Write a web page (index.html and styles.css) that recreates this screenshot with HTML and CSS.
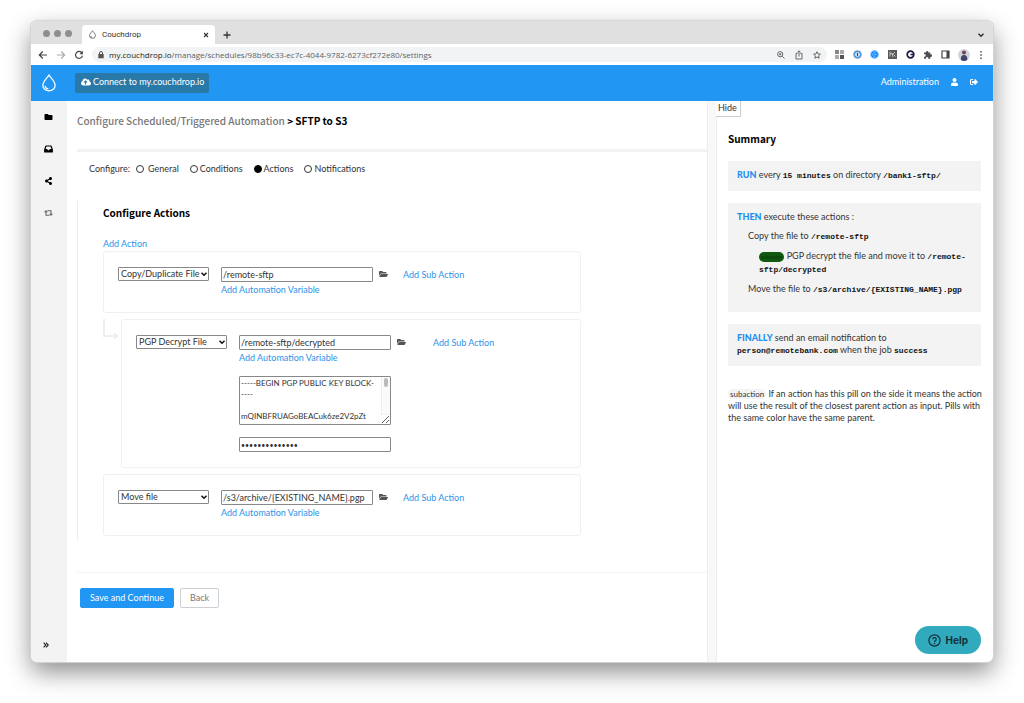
FILE: index.html
```html
<!DOCTYPE html>
<html lang="en">
<head>
<meta charset="utf-8">
<meta name="viewport" content="width=device-width, initial-scale=1">
<title>Couchdrop</title>
<link rel="stylesheet" href="styles.css">
</head>
<body>
<svg class="defs" aria-hidden="true">
  <symbol id="drop" viewBox="0 0 16 20"><path d="M8 1.200C6 4.600 1.200 8.400 1.200 12.500a6.800 6.300 0 0 0 13.600 0C14.800 8.400 10 4.600 8 1.200z" fill="none" stroke="currentColor" stroke-width="1.400"/><path d="M3.600 13.200c.3 2 1.600 3.200 3.800 3.500" fill="none" stroke="currentColor" stroke-width="1.300"/></symbol>
  <symbol id="folder-open" viewBox="0 0 576 512"><path fill="currentColor" d="M572.694 292.093L500.27 416.248A63.997 63.997 0 0 1 444.989 448H45.025c-18.523 0-30.064-20.093-20.731-36.093l72.424-124.155A64 64 0 0 1 152 256h399.964c18.523 0 30.064 20.093 20.73 36.093zM152 224h328v-48c0-26.51-21.49-48-48-48H272l-64-64H48C21.49 64 0 85.49 0 112v278.046l69.077-118.418C86.214 242.25 117.989 224 152 224z"/></symbol>
  <symbol id="chevron" viewBox="0 0 8 8"><path d="M1.500 2.800L4 5.300l2.500-2.500" fill="none" stroke="currentColor" stroke-width="1.500"/></symbol>
</svg>

<div class="window">
  <div class="tabstrip">
    <div class="lights"><i></i><i></i><i></i></div>
    <div class="tab">
      <svg class="tab-icon"><use href="#drop"/></svg>
      <span>Couchdrop</span>
      <button class="plain tab-close" aria-label="Close tab"><svg width="6" height="6" viewBox="0 0 6 6"><path d="M1 1l4 4M5 1L1 5" stroke="#333" stroke-width="1.100"/></svg></button>
    </div>
    <button class="plain tab-new" aria-label="New tab"><svg width="8" height="8" viewBox="0 0 8 8"><path d="M4 .5v7M.5 4h7" stroke="#333" stroke-width="1.300"/></svg></button>
    <button class="plain tab-list" aria-label="Search tabs"><svg width="8" height="8"><use href="#chevron"/></svg></button>
  </div>

  <div class="toolbar">
    <div class="nav">
      <button class="plain" aria-label="Back"><svg width="10" height="10" viewBox="0 0 10 10"><path d="M9 5H1.500M4.800 1.500L1.300 5l3.500 3.500" fill="none" stroke="#444" stroke-width="1.200"/></svg></button>
      <button class="plain" aria-label="Forward"><svg width="10" height="10" viewBox="0 0 10 10"><path d="M1 5h7.500M5.200 1.500L8.700 5 5.200 8.500" fill="none" stroke="#aaa" stroke-width="1.100"/></svg></button>
      <button class="plain" aria-label="Reload"><svg width="10" height="10" viewBox="0 0 10 10"><path d="M8 3A3.500 3.500 0 1 0 8.500 5.600" fill="none" stroke="#444" stroke-width="1.200"/><path d="M8.900.8v3.400H5.500z" fill="#444"/></svg></button>
    </div>
    <div class="address">
      <svg width="6" height="8" viewBox="0 0 6 8"><path d="M.3 3h5.400v4.300H.3z" fill="#555"/><path d="M1.500 3V2a1.500 1.500 0 0 1 3 0v1" fill="none" stroke="#555"/></svg>
      <span class="url"><b>my.couchdrop.io</b>/manage/schedules/98b96c33-ec7c-4044-9782-6273cf272e80/settings</span>
      <div class="address-tools">
        <svg width="8" height="8" viewBox="0 0 8 8"><circle cx="3.200" cy="3.200" r="2.600" fill="none" stroke="#666"/><path d="M5.200 5.200L7.600 7.600M2 3.200h2.400M3.200 2v2.400" stroke="#666" stroke-width=".9"/></svg>
        <svg width="8" height="10" viewBox="0 0 8 10"><path d="M2.500 3.500H1V9h6V3.500H5.500M4 6.500V1M2.300 2.500L4 .8l1.700 1.700" fill="none" stroke="#666"/></svg>
        <svg width="8" height="8" viewBox="0 0 8 8"><path d="M4 .7l1 2.200 2.400.3-1.800 1.600.5 2.400L4 6 1.900 7.200l.5-2.400L.6 3.200 3 2.900z" fill="none" stroke="#555" stroke-width=".9"/></svg>
      </div>
    </div>
    <div class="extensions">
      <svg width="9" height="9" viewBox="0 0 9 9"><path d="M0 0h4v4H0z" fill="#888"/><path d="M5 0h4v4H5zM0 5h4v4H0z" fill="#aaa"/><path d="M5 5h4v4H5z" fill="#555"/></svg>
      <svg width="9" height="9" viewBox="0 0 9 9"><circle cx="4.500" cy="4.500" r="4.300" fill="#8a9aac"/><circle cx="4.500" cy="4.500" r="3" fill="#d9ecff" stroke="#1e8cf0"/><path d="M4.500 2.700v3.600" stroke="#444" stroke-width="1.200"/></svg>
      <svg width="9" height="9" viewBox="0 0 9 9"><circle cx="4.500" cy="4.500" r="4.400" fill="#8cc4ff"/><circle cx="4.500" cy="4.500" r="3.300" fill="#0a84ff"/><path d="M6 3.300a1.900 1.900 0 1 0 0 2.400M4 4.500h2.500" fill="none" stroke="#9fd4ff" stroke-width=".7"/></svg>
      <svg width="9" height="9" viewBox="0 0 9 9"><path d="M0 0h9v9H0z" fill="#5a5a5a"/><path d="M2 1.500v5M2 4l2-1 1 4M4 5l3-3M5.500 4.500l2 2" fill="none" stroke="#ddd" stroke-width=".8"/></svg>
      <svg width="9" height="9" viewBox="0 0 9 9"><circle cx="4.500" cy="4.500" r="3.300" fill="#fff" stroke="#1b1646" stroke-width="1.700"/><path d="M4.500 4.500H8" stroke="#1b1646" stroke-width="1.500"/></svg>
      <svg width="9" height="9" viewBox="0 0 9 9"><path d="M1 2.500h2A1.200 1.200 0 1 1 5.300 2.500h2v2a1.200 1.200 0 1 1 0 2.200v2H5.200a1.200 1.200 0 1 0-2.200 0H1V6.500a1.200 1.200 0 1 0 0-2.200z" fill="#4a4d52"/></svg>
      <svg width="9" height="9" viewBox="0 0 9 9"><path d="M1 1h7v7H1z" fill="none" stroke="#444" stroke-width="1.200"/><path d="M5.500 1H8v7H5.500z" fill="#444"/></svg>
      <svg width="12" height="12" viewBox="0 0 12 12"><circle cx="6" cy="6" r="6" fill="#cfd4e0"/><circle cx="6" cy="3.500" r="2" fill="#6a4a42"/><path d="M3 11c-.5-4 1-5 3-5s3.700 1 3.200 5a6 6 0 0 1-6.200 0z" fill="#3c4468"/><path d="M5 6h1.500l-.5 3z" fill="#a33"/></svg>
      <svg width="4" height="8" viewBox="0 0 4 8"><path d="M1.300 0h1.400v1.500H1.300zM1.300 3.200h1.400v1.500H1.300zM1.300 6.400h1.400v1.500H1.300z" fill="#444"/></svg>
    </div>
  </div>

  <header class="appbar">
    <a class="brand" href="#" aria-label="Couchdrop"><svg width="16" height="18"><use href="#drop"/></svg></a>
    <a class="connect" href="#"><svg width="10" height="8" viewBox="0 0 640 512"><path fill="currentColor" d="M537.6 226.6c4.100-10.700 6.400-22.400 6.400-34.600 0-53-43-96-96-96-19.700 0-38.100 6-53.300 16.200C367 64.200 315.300 32 256 32c-88.400 0-160 71.600-160 160 0 2.700.1 5.400.2 8.100C40.200 219.800 0 273.200 0 336c0 79.500 64.500 144 144 144h368c70.700 0 128-57.300 128-128 0-61.900-44-113.600-102.400-125.400zM393.400 288H328v112c0 8.800-7.200 16-16 16h-48c-8.800 0-16-7.200-16-16V288h-65.400c-14.300 0-21.400-17.200-11.300-27.300l105.400-105.400c6.200-6.200 16.400-6.200 22.600 0l105.400 105.400c10.100 10.100 2.900 27.300-11.300 27.300z"/></svg>Connect to my.couchdrop.io</a>
    <nav class="account">
      <a href="#">Administration</a>
      <a href="#" aria-label="Profile"><svg width="7" height="8" viewBox="0 0 448 512"><path fill="currentColor" d="M224 256c70.700 0 128-57.300 128-128S294.700 0 224 0 96 57.300 96 128s57.300 128 128 128zm89.600 32h-16.700c-22.200 10.200-46.900 16-72.900 16s-50.600-5.800-72.900-16h-16.700C60.200 288 0 348.200 0 422.400V464c0 26.500 21.500 48 48 48h352c26.500 0 48-21.500 48-48v-41.600c0-74.200-60.200-134.400-134.400-134.400z"/></svg></a>
      <a href="#" aria-label="Sign out"><svg width="8" height="8" viewBox="0 0 512 512"><path fill="currentColor" d="M497 273L329 441c-15 15-41 4.500-41-17v-96H152c-13.300 0-24-10.700-24-24v-96c0-13.300 10.700-24 24-24h136V88c0-21.400 25.900-32 41-17l168 168c9.300 9.400 9.300 24.600 0 34zM192 436v-40c0-6.600-5.400-12-12-12H96c-17.700 0-32-14.300-32-32V160c0-17.700 14.300-32 32-32h84c6.600 0 12-5.400 12-12V76c0-6.600-5.400-12-12-12H96c-53 0-96 43-96 96v192c0 53 43 96 96 96h84c6.600 0 12-5.400 12-12z"/></svg></a>
    </nav>
  </header>

  <div class="app">
    <nav class="rail">
      <a href="#" aria-label="Files"><svg width="9" height="8" viewBox="0 0 512 512"><path d="M464 128H272l-64-64H48C21.490 64 0 85.490 0 112v288c0 26.510 21.490 48 48 48h416c26.510 0 48-21.490 48-48V176c0-26.510-21.490-48-48-48z"/></svg></a>
      <a href="#" aria-label="Inbox"><svg width="9" height="8" viewBox="0 0 9 8"><path d="M2 1h5l1.300 3.500V7H.7V4.500zM1 4.700h2l.7 1.200h1.600L6 4.700h2" fill="none" stroke="#000" stroke-width="1.200" stroke-linejoin="round"/><path d="M.7 5h2.100l.9 1.200h1.600L6.200 5h2.100v2H.7z"/></svg></a>
      <a href="#" aria-label="Shares"><svg width="9" height="8" viewBox="0 0 448 512"><path d="M352 320c-22.608 0-43.387 7.819-59.790 20.895l-102.486-64.054a96.551 96.551 0 0 0 0-41.683l102.486-64.054C308.613 184.181 329.392 192 352 192c53.019 0 96-42.981 96-96S405.019 0 352 0s-96 42.981-96 96c0 7.158.79 14.130 2.276 20.841L155.790 180.895C139.387 167.819 118.608 160 96 160c-53.019 0-96 42.981-96 96s42.981 96 96 96c22.608 0 43.387-7.819 59.790-20.895l102.486 64.054A96.301 96.301 0 0 0 256 416c0 53.019 42.981 96 96 96s96-42.981 96-96-42.981-96-96-96z"/></svg></a>
      <a href="#" aria-label="Automations"><svg width="9" height="8" viewBox="0 0 10 8"><path d="M2.200 2.500v4h4M3.800 1.500h4v4" fill="none" stroke="#666" stroke-width="1.200"/><path d="M0 3.200L2.200.7l2.200 2.500zM5.600 4.800L7.800 7.300 10 4.800z" fill="#666"/></svg></a>
      <button class="plain rail-toggle" aria-label="Expand menu"><svg width="6" height="6" viewBox="0 0 6 6"><path d="M.6.6L2.900 3 .6 5.400M3 .6L5.300 3 3 5.400" fill="none" stroke="#222" stroke-width="1.100"/></svg></button>
    </nav>

    <main class="main">
      <h1 class="title"><span>Configure Scheduled/Triggered Automation</span> &gt; SFTP to S3</h1>
      <form class="form">
        <div class="steps" role="radiogroup" aria-label="Configure">
          <span>Configure:</span>
          <label class="step step-first"><input type="radio" name="step">General</label>
          <label class="step"><input type="radio" name="step">Conditions</label>
          <label class="step"><input type="radio" name="step" checked>Actions</label>
          <label class="step"><input type="radio" name="step">Notifications</label>
        </div>

        <section class="actions">
          <h2 class="heading">Configure Actions</h2>
          <a class="link add-action" href="#">Add Action</a>

          <div class="card">
            <div class="select"><select aria-label="Action 1"><option>Copy/Duplicate File</option></select><svg><use href="#chevron"/></svg></div>
            <div class="fields">
              <input class="field" type="text" aria-label="Path for action 1" value="/remote-sftp">
              <a class="link" href="#">Add Automation Variable</a>
            </div>
            <button class="plain browse" type="button" aria-label="Browse"><svg><use href="#folder-open"/></svg></button>
            <a class="link sub-link" href="#">Add Sub Action</a>
          </div>

          <div class="nested">
            <svg class="branch" width="17" height="22" viewBox="0 0 17 22"><path d="M1 0v17h11" fill="none" stroke="#eee" stroke-width="2"/><path d="M11 13l5 4-5 4z" fill="#eee"/></svg>
            <div class="card card-sub">
              <div class="select"><select aria-label="Action 2"><option>PGP Decrypt File</option></select><svg><use href="#chevron"/></svg></div>
              <div class="fields">
                <input class="field" type="text" aria-label="Path for action 2" value="/remote-sftp/decrypted">
                <a class="link" href="#">Add Automation Variable</a>
                <div class="key">
                  <textarea aria-label="PGP key">-----BEGIN PGP PUBLIC KEY BLOCK-
----

mQINBFRUAGoBEACuk6ze2V2pZt</textarea>
                  <span class="key-scroll"><i></i></span>
                </div>
                <input class="field field-secret" type="password" aria-label="Passphrase" value="passphrase1234">
              </div>
              <button class="plain browse" type="button" aria-label="Browse"><svg><use href="#folder-open"/></svg></button>
              <a class="link sub-link" href="#">Add Sub Action</a>
            </div>
          </div>

          <div class="card">
            <div class="select"><select aria-label="Action 3"><option>Move file</option></select><svg><use href="#chevron"/></svg></div>
            <div class="fields">
              <input class="field" type="text" aria-label="Path for action 3" value="/s3/archive/{EXISTING_NAME}.pgp">
              <a class="link" href="#">Add Automation Variable</a>
            </div>
            <button class="plain browse" type="button" aria-label="Browse"><svg><use href="#folder-open"/></svg></button>
            <a class="link sub-link" href="#">Add Sub Action</a>
          </div>
        </section>

        <div class="buttons">
          <button class="btn btn-primary" type="button">Save and Continue</button>
          <button class="btn" type="button">Back</button>
        </div>
      </form>
    </main>

    <aside class="summary">
      <button class="hide" type="button">Hide</button>
      <div class="summary-body">
        <h2 class="heading">Summary</h2>
        <div class="box"><p><strong>RUN</strong> every <code>15 minutes</code> on directory <code>/bank1-sftp/</code></p></div>
        <div class="box box-then">
          <p><strong>THEN</strong> execute these actions :</p>
          <p class="level-1">Copy the file to <code>/remote-sftp</code></p>
          <p class="level-2"><span class="pill pill-green">subaction</span> PGP decrypt the file and move it to <code>/remote-sftp/decrypted</code></p>
          <p class="level-1">Move the file to <code>/s3/archive/{EXISTING_NAME}.pgp</code></p>
        </div>
        <div class="box"><p><strong>FINALLY</strong> send an email notification to <code>person@remotebank.com</code> when the job <code>success</code></p></div>
        <p class="note"><span class="pill">subaction</span> If an action has this pill on the side it means the action will use the result of the closest parent action as input. Pills with the same color have the same parent.</p>
      </div>
    </aside>
  </div>

  <button class="help" type="button"><svg width="13" height="13" viewBox="0 0 13 13"><circle cx="6.500" cy="6.500" r="5.600" fill="none" stroke="currentColor" stroke-width="1.200"/><path d="M4.800 5.300a1.700 1.700 0 1 1 2.600 1.400c-.6.400-.9.600-.9 1.200" fill="none" stroke="currentColor" stroke-width="1.200"/><circle cx="6.500" cy="9.500" r=".8" fill="currentColor"/></svg>Help</button>
</div>
</body>
</html>
```
FILE: styles.css
```css
* { box-sizing: border-box; }

body {
  margin: 0;
  min-height: 100vh;
  padding: 21px 31px 41px;
  display: flex;
  background: #fff;
  color: #333;
  font: 9px/12px Lato, sans-serif;
}

svg { display: block; flex: none; }
a { color: inherit; text-decoration: none; }
p, h1, h2 { margin: 0; }
input, select, textarea, button { font: inherit; color: inherit; margin: 0; }
.defs { position: absolute; width: 0; height: 0; }
.plain { padding: 0; border: 0; background: none; }

.window {
  position: relative;
  flex: 1;
  min-width: 0;
  display: flex;
  flex-direction: column;
  overflow: hidden;
  border-radius: 6px;
  background: #fff;
  box-shadow: 0 0 1px 1px #d4d4d4, 0 10px 24px rgba(0, 0, 0, .45);
}

/* Browser chrome */
.tabstrip {
  height: 23px;
  padding: 4px 8px 0 12px;
  display: flex;
  background: #e0e0e0;
}
.lights { display: flex; gap: 4px; align-items: center; height: 16px; }
.lights i { width: 7px; height: 7px; border-radius: 50%; background: #8e8e8e; }
.tab {
  width: 133px;
  margin-left: 10px;
  padding: 0 6px 0 7px;
  display: flex;
  align-items: center;
  gap: 6px;
  border-radius: 4px 4px 0 0;
  background: #fff;
  font: 8px/12px Roboto, sans-serif;
}
.tab-icon { width: 7px; height: 9px; }
.tab-close { margin-left: auto; }
.tab-new { margin-left: 8px; }
.tab-list { margin-left: auto; }
.toolbar {
  height: 21px;
  padding: 0 10px 0 7px;
  display: flex;
  align-items: center;
  gap: 8px;
}
.nav { display: flex; gap: 8px; }
.address {
  flex: 1;
  height: 15px;
  padding: 0 6px 0 6px;
  display: flex;
  align-items: center;
  gap: 5px;
  border-radius: 8px;
  background: #f1f3f4;
  color: #5f6368;
  font: 8px/12px "Open Sans", sans-serif;
}
.url b { color: #222; font-weight: 400; }
.address-tools { margin-left: auto; display: flex; align-items: center; gap: 10px; }
.extensions { width: 148px; display: flex; align-items: center; justify-content: space-between; }

/* Application bar */
.appbar {
  min-height: 36px;
  padding: 0 15px 0 10px;
  display: flex;
  align-items: center;
  background: #2196f3;
  color: #fff;
}
.connect {
  margin-left: 18px;
  padding: 3px 5px 5px 6px;
  display: flex;
  align-items: center;
  gap: 2px;
  border-radius: 2px;
  background: #2878a8;
}
.account { margin-left: auto; padding-bottom: 2px; display: flex; align-items: center; gap: 12px; }

.app {
  flex: 1;
  display: grid;
  grid-template-columns: 36px minmax(0, 1fr) 285px;
}
.rail {
  padding: 12px 2px 14px 0;
  display: flex;
  flex-direction: column;
  align-items: center;
  gap: 24px;
  background: #f3f3f3;
}
.rail-toggle { margin: auto 4px 0 0; }

/* Main form */
.main { padding: 12px 0 0 10px; }
.title, .heading {
  color: #000;
  font: bold 10px/16px "Noto Sans CJK JP", sans-serif;
}
.title { padding-bottom: 20px; border-bottom: 3px solid #f2f2f2; }
.title span { color: #777; font-weight: 500; }
.steps { padding: 11px 0 0 12px; display: flex; }
.step { display: flex; align-items: center; gap: 2px; margin-left: 11px; }
.step-first { margin-left: 6px; gap: 4px; }
.step input {
  width: 8px;
  height: 8px;
  appearance: none;
  border: 1px solid #333;
  border-radius: 50%;
}
.step input:checked { background: #000; border-color: #000; }

.actions {
  margin-top: 26px;
  padding: 4px 127px 5px 25px;
  border-left: 1px solid #eee;
}
.link { color: #2e92e8; }
.add-action { display: block; margin: 17px 0 1px; }
.card {
  min-height: 62px;
  padding: 15px 14px;
  display: flex;
  align-items: flex-start;
  border: 1px solid #f0f0f0;
  border-radius: 3px;
}
.nested { margin: 6px 0; display: flex; gap: 1px; }
.card-sub { flex: 1; }
.select { display: grid; width: 91px; flex: none; align-items: center; }
.select > * { grid-area: 1 / 1; }
.select select {
  appearance: none;
  height: 14px;
  padding: 0 2px;
  border: 1px solid #888;
  border-radius: 1px;
  background: #fff;
  line-height: 12px;
}
.select svg { justify-self: end; width: 8px; height: 8px; margin-right: 1px; color: #111; pointer-events: none; }
.fields {
  width: 152px;
  flex: none;
  margin-left: 12px;
  display: flex;
  flex-direction: column;
  gap: 2px;
}
.field, .key textarea {
  display: block;
  width: 100%;
  padding: 0 1px;
  border: 1px solid #888;
  border-radius: 1px;
  background: #fff;
}
.field { height: 15px; }
.field-secret { font-size: 7px; }
.key { position: relative; margin: 10px 0; }
.key textarea { height: 49px; padding-top: 1px; font-size: 8px; line-height: 11px; overflow: hidden; }
.key-scroll {
  position: absolute;
  top: 1px;
  right: 1px;
  width: 9px;
  height: 38px;
  padding: 1px 2px;
  border-left: 1px solid #eee;
  border-bottom: 1px solid #eee;
  background: #fafafa;
}
.key-scroll i { display: block; height: 9px; border-radius: 2px; background: #bbb; }
.browse { margin: 3px 0 0 6px; color: #555; }
.browse svg { width: 9px; height: 8px; }
.sub-link { margin: 2px 0 0 15px; }
.card-sub .sub-link { margin-left: 27px; }

.buttons {
  margin-top: 31px;
  padding: 15px 3px;
  display: flex;
  gap: 6px;
  border-top: 1px solid #f3f3f3;
}
.btn {
  height: 20px;
  padding: 0 9px;
  border: 1px solid #ccd0d4;
  border-radius: 2px;
  background: #fff;
  color: #777;
}
.btn-primary { border-color: #2196f3; background: #2196f3; color: #fff; }

/* Summary panel */
.summary {
  border-left: 8px solid #f8f8f8;
  box-shadow: inset 1px 0 #eee, -1px 0 #eee;
}
.hide {
  display: block;
  height: 16px;
  padding: 0 3px 2px 2px;
  border: solid #ccc;
  border-width: 0 1px 1px 0;
  background: #fff;
}
.summary-body { padding: 14px 12px 0; }
.box { margin-top: 12px; padding: 8px 9px 9px; background: #f3f3f3; }
.heading + .box { margin-top: 14px; }
.box-then { padding-bottom: 16px; }
.box strong { color: #1e8ef0; font-weight: 900; }
.box p + p { margin-top: 7px; }
.box .level-1 { margin-left: 11px; }
.box .level-2 { margin-left: 22px; }
code { color: #111; font: bold 8px/12px "Liberation Mono", monospace; }
.pill {
  padding: 0 2px;
  display: inline-block;
  border-radius: 6px;
  background: #f3f3f3;
  font-size: 8px;
  line-height: 10px;
}
.pill-green { background: #0f5a0f; color: #063806; font-size: 5px; }
.note { margin: 22px -8px 0 0; }

.help {
  position: absolute;
  right: 12px;
  bottom: 8px;
  height: 28px;
  padding: 0 13px;
  display: flex;
  align-items: center;
  gap: 5px;
  border: 0;
  border-radius: 14px;
  background: #30aabc;
  color: #14303a;
  font: bold 10px/12px Inter, sans-serif;
}
```
